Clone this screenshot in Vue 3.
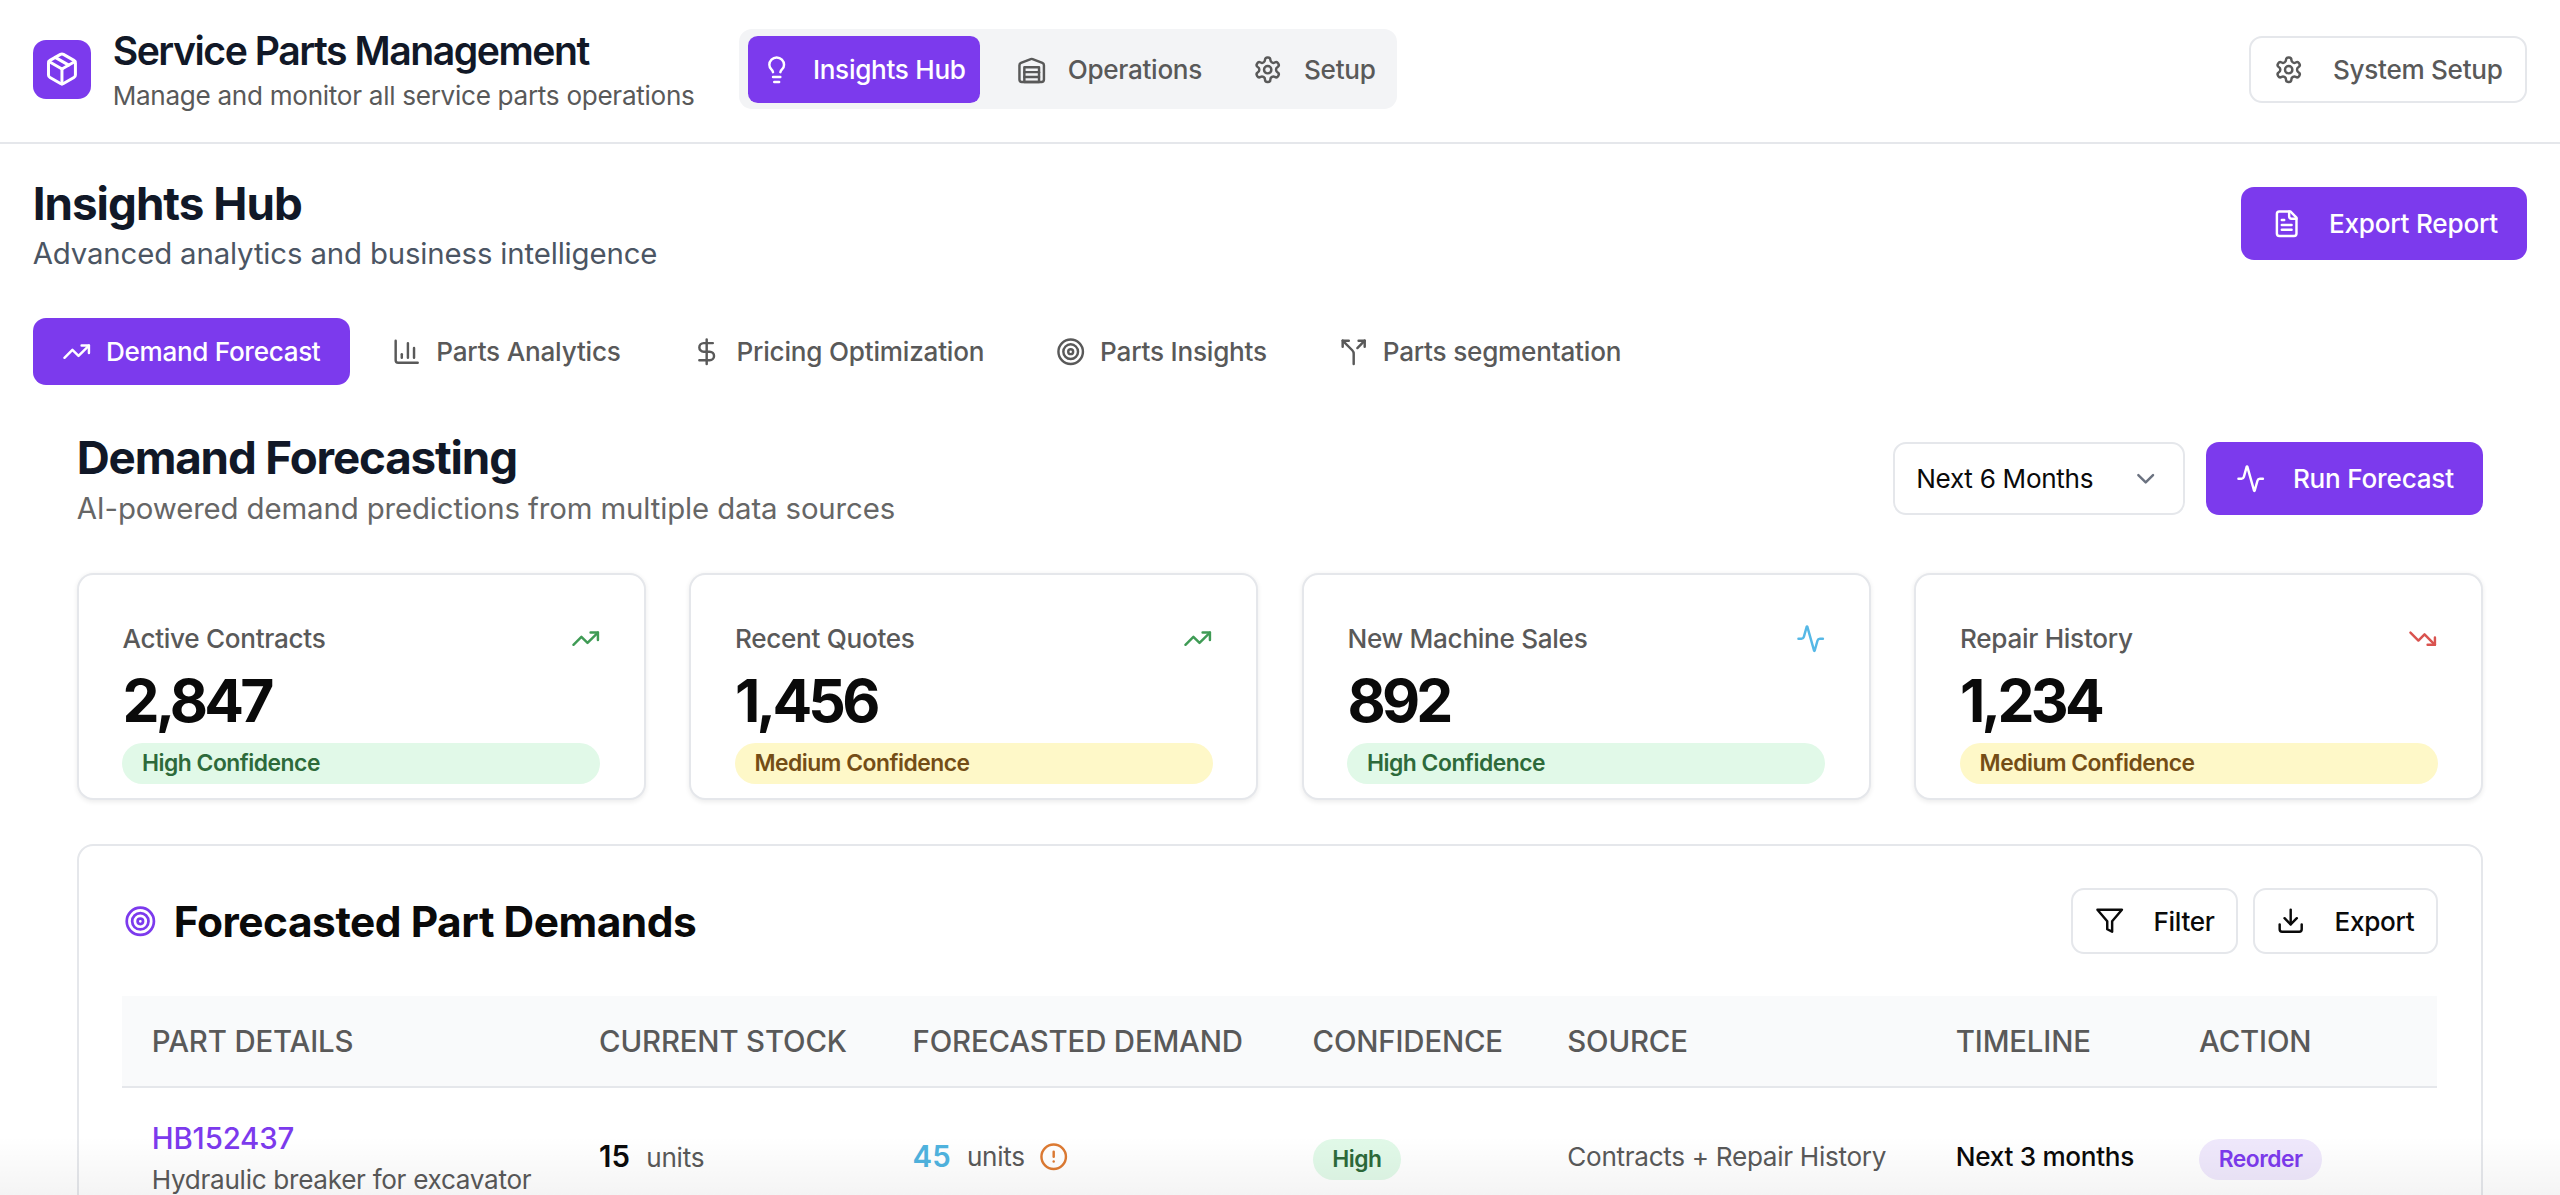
<script setup>
import { h } from 'vue'

const paths = {
  package: '<path d="m7.5 4.27 9 5.15"/><path d="M21 8a2 2 0 0 0-1-1.73l-7-4a2 2 0 0 0-2 0l-7 4A2 2 0 0 0 3 8v8a2 2 0 0 0 1 1.73l7 4a2 2 0 0 0 2 0l7-4A2 2 0 0 0 21 16Z"/><path d="m3.3 7 8.7 5 8.7-5"/><path d="M12 22V12"/>',
  bulb: '<path d="M15 14c.2-1 .7-1.7 1.5-2.5 1-.9 1.5-2.2 1.5-3.5A6 6 0 0 0 6 8c0 1 .2 2.2 1.5 3.5.7.7 1.3 1.5 1.5 2.5"/><path d="M9 18h6"/><path d="M10 22h4"/>',
  warehouse: '<path d="M22 8.35V20a2 2 0 0 1-2 2H4a2 2 0 0 1-2-2V8.35A2 2 0 0 1 3.26 6.5l8-3.2a2 2 0 0 1 1.48 0l8 3.2A2 2 0 0 1 22 8.35Z"/><path d="M6 18h12"/><path d="M6 14h12"/><rect width="12" height="12" x="6" y="10"/>',
  settings: '<path d="M12.22 2h-.44a2 2 0 0 0-2 2v.18a2 2 0 0 1-1 1.73l-.43.25a2 2 0 0 1-2 0l-.15-.08a2 2 0 0 0-2.73.73l-.22.38a2 2 0 0 0 .73 2.73l.15.1a2 2 0 0 1 1 1.72v.51a2 2 0 0 1-1 1.74l-.15.09a2 2 0 0 0-.73 2.73l.22.38a2 2 0 0 0 2.73.73l.15-.08a2 2 0 0 1 2 0l.43.25a2 2 0 0 1 1 1.73V20a2 2 0 0 0 2 2h.44a2 2 0 0 0 2-2v-.18a2 2 0 0 1 1-1.73l.43-.25a2 2 0 0 1 2 0l.15.08a2 2 0 0 0 2.73-.73l.22-.39a2 2 0 0 0-.73-2.73l-.15-.08a2 2 0 0 1-1-1.74v-.5a2 2 0 0 1 1-1.74l.15-.09a2 2 0 0 0 .73-2.73l-.22-.38a2 2 0 0 0-2.73-.73l-.15.08a2 2 0 0 1-2 0l-.43-.25a2 2 0 0 1-1-1.73V4a2 2 0 0 0-2-2z"/><circle cx="12" cy="12" r="3"/>',
  file: '<path d="M15 2H6a2 2 0 0 0-2 2v16a2 2 0 0 0 2 2h12a2 2 0 0 0 2-2V7Z"/><path d="M14 2v4a2 2 0 0 0 2 2h4"/><path d="M10 9H8"/><path d="M16 13H8"/><path d="M16 17H8"/>',
  up: '<path d="M22 7 13.5 15.5 8.5 10.5 2 17"/><path d="M16 7h6v6"/>',
  down: '<path d="M22 17 13.5 8.5 8.5 13.5 2 7"/><path d="M16 17h6v-6"/>',
  chart: '<path d="M3 3v16a2 2 0 0 0 2 2h16"/><path d="M18 17V9"/><path d="M13 17V5"/><path d="M8 17v-3"/>',
  dollar: '<line x1="12" x2="12" y1="2" y2="22"/><path d="M17 5H9.5a3.5 3.5 0 0 0 0 7h5a3.5 3.5 0 0 1 0 7H6"/>',
  target: '<circle cx="12" cy="12" r="10"/><circle cx="12" cy="12" r="6"/><circle cx="12" cy="12" r="2"/>',
  split: '<path d="M16 3h5v5"/><path d="M8 3H3v5"/><path d="M12 22v-8.3a4 4 0 0 0-1.172-2.872L3 3"/><path d="m15 9 6-6"/>',
  activity: '<path d="M22 12h-2.48a2 2 0 0 0-1.93 1.46l-2.35 8.36a.25.25 0 0 1-.48 0L9.24 2.18a.25.25 0 0 0-.48 0l-2.35 8.36A2 2 0 0 1 4.49 12H2"/>',
  chevron: '<path d="m6 9 6 6 6-6"/>',
  filter: '<polygon points="22 3 2 3 10 12.46 10 19 14 21 14 12.46 22 3"/>',
  download: '<path d="M21 15v4a2 2 0 0 1-2 2H5a2 2 0 0 1-2-2v-4"/><polyline points="7 10 12 15 17 10"/><line x1="12" x2="12" y1="15" y2="3"/>',
  alert: '<circle cx="12" cy="12" r="10"/><line x1="12" x2="12" y1="8" y2="12"/><line x1="12" x2="12.01" y1="16" y2="16"/>'
}

const Icon = (props) =>
  h('svg', {
    width: props.size || 18,
    height: props.size || 18,
    viewBox: '0 0 24 24',
    fill: 'none',
    stroke: 'currentColor',
    'stroke-width': props.sw || 2,
    'stroke-linecap': 'round',
    'stroke-linejoin': 'round',
    style: { flex: 'none', display: 'block' },
    innerHTML: paths[props.name]
  })
Icon.props = ['name', 'size', 'sw']

const tabs = [
  { icon: 'up', label: 'Demand Forecast', active: true },
  { icon: 'chart', label: 'Parts Analytics' },
  { icon: 'dollar', label: 'Pricing Optimization' },
  { icon: 'target', label: 'Parts Insights' },
  { icon: 'split', label: 'Parts segmentation' }
]

const stats = [
  { label: 'Active Contracts', value: '2,847', icon: 'up', tone: 'green', conf: 'High Confidence', kind: 'high' },
  { label: 'Recent Quotes', value: '1,456', icon: 'up', tone: 'green', conf: 'Medium Confidence', kind: 'medium' },
  { label: 'New Machine Sales', value: '892', icon: 'activity', tone: 'blue', conf: 'High Confidence', kind: 'high' },
  { label: 'Repair History', value: '1,234', icon: 'down', tone: 'red', conf: 'Medium Confidence', kind: 'medium' }
]

const columns = ['Part Details', 'Current Stock', 'Forecasted Demand', 'Confidence', 'Source', 'Timeline', 'Action']
const widths = [274, 192, 245, 156, 238, 149, 164]
</script>

<template>
  <div class="app">
    <header class="topbar">
      <div class="brand">
        <div class="logo"><Icon name="package" :size="22" /></div>
        <div class="brand-text">
          <div class="brand-title">Service Parts Management</div>
          <div class="brand-sub">Manage and monitor all service parts operations</div>
        </div>
      </div>
      <nav class="nav">
        <a class="nav-item active"><Icon name="bulb" /><span>Insights Hub</span></a>
        <a class="nav-item"><Icon name="warehouse" /><span>Operations</span></a>
        <a class="nav-item"><Icon name="settings" /><span>Setup</span></a>
      </nav>
      <button class="system-btn"><Icon name="settings" /><span>System Setup</span></button>
    </header>

    <main class="main">
      <div class="page-head">
        <div>
          <h1 class="page-title">Insights Hub</h1>
          <p class="page-sub">Advanced analytics and business intelligence</p>
        </div>
        <button class="primary export-report"><Icon name="file" /><span>Export Report</span></button>
      </div>

      <div class="tabs">
        <a v-for="t in tabs" :key="t.label" class="tab" :class="{ active: t.active }">
          <Icon :name="t.icon" :size="18" /><span>{{ t.label }}</span>
        </a>
      </div>

      <section class="section">
        <div class="section-head">
          <div>
            <h2 class="section-title">Demand Forecasting</h2>
            <p class="section-sub">AI-powered demand predictions from multiple data sources</p>
          </div>
          <div class="section-actions">
            <div class="select"><span>Next 6 Months</span><Icon name="chevron" :size="18" class="chev" /></div>
            <button class="primary run"><Icon name="activity" /><span>Run Forecast</span></button>
          </div>
        </div>

        <div class="stats">
          <div v-for="s in stats" :key="s.label" class="stat">
            <div class="stat-top">
              <span class="stat-label">{{ s.label }}</span>
              <span class="stat-icon" :class="s.tone"><Icon :name="s.icon" /></span>
            </div>
            <div class="stat-value">{{ s.value }}</div>
            <div class="conf" :class="s.kind">{{ s.conf }}</div>
          </div>
        </div>

        <div class="panel">
          <div class="panel-head">
            <div class="panel-title">
              <span class="panel-icon"><Icon name="target" :size="20" /></span>
              <h3>Forecasted Part Demands</h3>
            </div>
            <div class="panel-actions">
              <button class="ghost"><Icon name="filter" /><span>Filter</span></button>
              <button class="ghost"><Icon name="download" /><span>Export</span></button>
            </div>
          </div>

          <table class="table">
            <colgroup>
              <col v-for="(w, i) in widths" :key="i" :style="{ width: w + 'px' }" />
            </colgroup>
            <thead>
              <tr><th v-for="c in columns" :key="c">{{ c }}</th></tr>
            </thead>
            <tbody>
              <tr>
                <td class="part">
                  <div class="part-id">HB152437</div>
                  <div class="part-desc">Hydraulic breaker for excavator</div>
                </td>
                <td><span class="qty">15</span><span class="units">units</span></td>
                <td>
                  <div class="demand">
                    <span class="qty sky">45</span><span class="units">units</span>
                    <span class="warn"><Icon name="alert" :size="18" /></span>
                  </div>
                </td>
                <td><span class="badge high">High</span></td>
                <td class="source">Contracts + Repair History</td>
                <td class="timeline">Next 3 months</td>
                <td><span class="badge reorder">Reorder</span></td>
              </tr>
            </tbody>
          </table>
        </div>
      </section>
    </main>

    <div class="fade"></div>
  </div>
</template>

<style>
html, body { margin: 0; background: #fff; overflow: hidden; }
</style>

<style scoped>
.app {
  zoom: 1.63265;
  position: relative;
  width: 1568px;
  height: 732px;
  overflow: hidden;
  background: #fff;
  font-family: Inter, "Liberation Sans", sans-serif;
  font-size: 16px;
  letter-spacing: -0.18px;
  color: #0a0a0a;
}
h1, h2, h3, p { margin: 0; }
button { font: inherit; letter-spacing: inherit; cursor: pointer; }

.topbar {
  display: flex;
  align-items: center;
  height: 88px;
  box-sizing: border-box;
  padding: 0 20px 2px;
  border-bottom: 1.25px solid #e5e7eb;
}
.brand { display: flex; align-items: center; gap: 13px; }
.brand-text { padding-top: 2px; }
.logo {
  width: 36px;
  height: 36px;
  border-radius: 8px;
  background: #7c3aed;
  color: #fff;
  display: flex;
  align-items: center;
  justify-content: center;
}
.brand-title { font-size: 24px; line-height: 30px; font-weight: 600; color: #111827; letter-spacing: -0.9px; }
.brand-sub { font-size: 16px; line-height: 24px; color: #595959; }

.nav {
  display: flex;
  gap: 13.5px;
  margin-left: 27px;
  padding: 4px 4px 4px 5.5px;
  background: #f3f4f6;
  border-radius: 8px;
}
.nav-item {
  display: flex;
  align-items: center;
  gap: 13px;
  height: 41px;
  padding: 0 9px;
  border-radius: 6px;
  font-weight: 500;
  color: #595959;
}
.nav-item.active { background: #7c3aed; color: #fff; }
.system-btn {
  margin-left: auto;
  display: flex;
  align-items: center;
  gap: 18px;
  height: 41px;
  padding: 0 14px;
  background: #fff;
  border: 1.25px solid #e5e7eb;
  border-radius: 8px;
  font-weight: 500;
  color: #595959;
}

.main { padding: 19px 20px 0; }
.page-head { display: flex; align-items: center; justify-content: space-between; }
.page-title { font-size: 28px; line-height: 35px; font-weight: 700; color: #111827; letter-spacing: -0.6px; }
.page-sub { font-size: 18px; line-height: 27px; color: #4b5563; letter-spacing: -0.09px; }
.primary {
  display: flex;
  align-items: center;
  height: 45px;
  background: #7c3aed;
  color: #fff;
  border: 0;
  border-radius: 8px;
  font-weight: 500;
  letter-spacing: -0.13px;
}
.export-report { gap: 17px; padding: 0 18px 0 19px; margin-bottom: 2px; }

.tabs { display: flex; gap: 8px; margin-top: 26px; }
.tab {
  display: flex;
  align-items: center;
  gap: 9px;
  height: 41px;
  padding: 0 18px;
  border-radius: 8px;
  font-weight: 500;
  letter-spacing: -0.13px;
  color: #595959;
}
.tab.active { background: #7c3aed; color: #fff; letter-spacing: -0.2px; }

.section { padding: 27px 27px 0; }
.section-head { display: flex; align-items: center; justify-content: space-between; }
.section-title { font-size: 28px; line-height: 35px; font-weight: 700; color: #111827; letter-spacing: -0.7px; }
.section-sub { font-size: 18px; line-height: 27px; color: #666; letter-spacing: -0.08px; }
.section-actions { display: flex; gap: 13px; margin-bottom: 2px; }
.select {
  display: flex;
  align-items: center;
  justify-content: space-between;
  width: 179px;
  height: 45px;
  box-sizing: border-box;
  padding: 0 14px 0 13px;
  background: #fff;
  border: 1.25px solid #e5e7eb;
  border-radius: 8px;
  color: #0a0a0a;
}
.chev { color: #6b7280; }
.run { gap: 17px; padding: 0 18px; }

.stats {
  display: grid;
  grid-template-columns: repeat(4, 1fr);
  gap: 26.7px;
  margin-top: 26px;
}
.stat {
  height: 139px;
  box-sizing: border-box;
  padding: 26.75px 26.75px 9px;
  background: #fff;
  border: 1.25px solid #e5e7eb;
  border-radius: 10px;
  box-shadow: 0 1px 3px rgba(0, 0, 0, 0.08);
}
.stat-top { display: flex; align-items: center; justify-content: space-between; height: 24px; }
.stat-label { color: #595959; font-weight: 500; }
.stat-icon.green { color: #3f9b55; }
.stat-icon.blue { color: #56b8e6; }
.stat-icon.red { color: #d9534f; }
.stat-value { margin-top: 6px; font-size: 36px; line-height: 40px; font-weight: 700; color: #0a0a0a; letter-spacing: -2.3px; }
.conf {
  margin-top: 6px;
  height: 25px;
  line-height: 25px;
  padding: 0 12px;
  border-radius: 12.5px;
  font-size: 14px;
  font-weight: 600;
  letter-spacing: -0.3px;
}
.conf.high { background: #e1f9e8; color: #2d6a3a; }
.conf.medium { background: #fef8c8; color: #744d16; }

.panel {
  margin-top: 27px;
  padding: 26px 26.75px;
  background: #fff;
  border: 1.25px solid #e5e7eb;
  border-radius: 10px;
}
.panel-head { display: flex; align-items: center; justify-content: space-between; }
.panel-title { display: flex; align-items: center; gap: 10.5px; padding-left: 1px; }
.panel-title h3 { padding-top: 1px; font-size: 26px; line-height: 35px; font-weight: 700; letter-spacing: -0.3px; color: #0a0a0a; }
.panel-icon { color: #7c3aed; }
.panel-actions { display: flex; gap: 9px; }
.ghost {
  display: flex;
  align-items: center;
  gap: 18px;
  height: 40px;
  padding: 0 13px;
  background: #fff;
  border: 1.25px solid #e5e7eb;
  border-radius: 8px;
  font-weight: 500;
  color: #0a0a0a;
}

.table {
  width: 1418px;
  margin-top: 26px;
  border-collapse: collapse;
  table-layout: fixed;
}
.table th {
  height: 55px;
  padding: 0 18px;
  background: #f9fafb;
  border-bottom: 1.25px solid #e5e7eb;
  text-align: left;
  font-size: 18px;
  font-weight: 500;
  color: #595959;
  text-transform: uppercase;
  white-space: nowrap;
  letter-spacing: -0.1px;
}
.table td { padding: 17px 18px 19px; vertical-align: middle; white-space: nowrap; }
.table td.part { padding-top: 19px; padding-bottom: 18px; }
.part-id { font-size: 18px; line-height: 25px; font-weight: 500; color: #7c3aed; letter-spacing: -0.1px; }
.part-desc { line-height: 24px; color: #595959; }
.qty { font-size: 18px; font-weight: 600; color: #0a0a0a; letter-spacing: 0; }
.qty.sky { color: #4fb3df; }
.units { margin-left: 10px; color: #595959; }
.demand { display: flex; align-items: center; }
.warn { margin-left: 9px; color: #dd7a32; }
.badge {
  display: inline-block;
  height: 25px;
  line-height: 25px;
  margin-top: 4px;
  padding: 0 12px;
  border-radius: 12.5px;
  font-size: 14px;
  font-weight: 600;
  letter-spacing: -0.3px;
  vertical-align: middle;
}
.badge.high { background: #e1f9e8; color: #2d6a3a; }
.badge.reorder { background: #efe8fc; color: #7c3aed; }
.source { color: #595959; }
.timeline { font-weight: 500; color: #0a0a0a; }

.fade {
  position: absolute;
  left: 0;
  right: 0;
  bottom: 0;
  height: 36px;
  background: linear-gradient(to bottom, rgba(0, 0, 0, 0), rgba(0, 0, 0, 0.045));
  pointer-events: none;
}
</style>
